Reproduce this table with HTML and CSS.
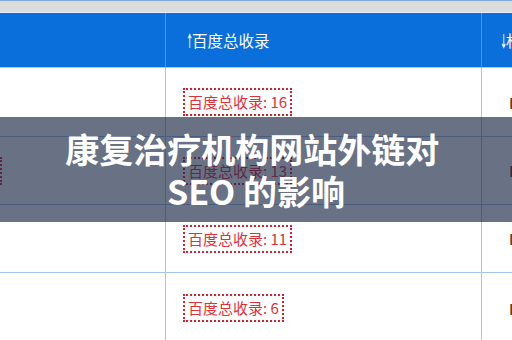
FILE: index.html
```html
<!DOCTYPE html>
<html lang="zh-CN">
<head>
<meta charset="utf-8">
<title>康复治疗机构网站外链对 SEO 的影响</title>
<link rel="stylesheet" href="styles.css">
</head>
<body>
<div class="page">
  <div class="topbar"></div>
  <div class="table">
    <div class="row head">
      <div class="cell c1"></div>
      <div class="cell c2"><span class="arrow">↑</span>百度总收录</div>
      <div class="cell c3"><span class="arrow">↓</span>权重</div>
    </div>
    <div class="row r1">
      <div class="cell c1"></div>
      <div class="cell c2"><span class="tag">百度总收录: 16</span></div>
      <div class="cell c3"><span class="dark">B</span></div>
    </div>
    <div class="row">
      <div class="cell c1"><span class="tag edge">百度总收录: 9</span></div>
      <div class="cell c2"><span class="tag">百度总收录: 13</span></div>
      <div class="cell c3"><span class="dark">B</span></div>
    </div>
    <div class="row">
      <div class="cell c1"></div>
      <div class="cell c2"><span class="tag">百度总收录: 11</span></div>
      <div class="cell c3"><span class="dark">B</span></div>
    </div>
    <div class="row last">
      <div class="cell c1"></div>
      <div class="cell c2"><span class="tag">百度总收录: 6</span></div>
      <div class="cell c3"><span class="dark">B</span></div>
    </div>
  </div>
  <div class="overlay">
    <h1 class="title">康复治疗机构网站外链对 SEO 的影响</h1>
  </div>
</div>
</body>
</html>
```
FILE: styles.css
```css
* { box-sizing: border-box; }
html, body { margin: 0; padding: 0; }
body {
  width: 512px;
  height: 340px;
  overflow: hidden;
  background: #ffffff;
  font-family: "Noto Sans CJK SC", "Noto Sans", sans-serif;
}
.page {
  position: relative;
  width: 512px;
  height: 340px;
  overflow: hidden;
}
.topbar {
  height: 13px;
  background: #dcdcdc;
  border-top: 1px solid #7fa9e0;
  border-bottom: 1px solid #e9eff8;
}
.table {
  display: flex;
  flex-direction: column;
}
.row {
  display: grid;
  grid-template-columns: 166px 316px 1fr;
  height: 68px;
}
.row.head {
  height: 55px;
  background: #0a6fda;
  color: #ffffff;
  font-size: 15.5px;
}
.row.r1 { height: 69px; }
.row.last { height: 70px; }
.cell {
  display: flex;
  align-items: center;
  border-right: 1px solid #a3c5ee;
  border-bottom: 1px solid #a3c5ee;
  overflow: hidden;
  white-space: nowrap;
}
.head .cell {
  border-right-color: #4d93e4;
  border-bottom-color: #a9caf0;
}
.row.last .cell { border-bottom: none; }
.arrow {
  display: inline-block;
  flex-shrink: 0;
  font-size: 16px;
  font-weight: bold;
  transform: scaleX(0.45);
  transform-origin: 0 50%;
  margin-right: -10px;
}
.c2 { padding-left: 20px; }
.row:not(.head) .c2 { padding-left: 17px; }
.c3 { padding-left: 18px; border-right: none; }
.row:not(.head) .c3 { padding-left: 27px; }
.c1 { justify-content: flex-end; padding-right: 163px; }
.tag {
  display: inline-block;
  border: 2px dotted #d8202c;
  padding: 2px 3px;
  color: #e0303a;
  font-size: 15px;
  line-height: 20px;
}
.tag.edge {
  flex-shrink: 0;
  color: #c02838;
}
.dark {
  color: #444444;
  font-size: 15px;
  font-weight: bold;
}
.overlay {
  position: absolute;
  left: 0;
  top: 117px;
  width: 512px;
  height: 105px;
  background: rgba(28, 40, 70, 0.66);
  display: flex;
  align-items: center;
  justify-content: center;
  padding: 0 56px;
}
.title {
  margin: 0;
  color: #ffffff;
  font-size: 34px;
  line-height: 42px;
  font-weight: bold;
  text-align: center;
  white-space: break-spaces;
  font-family: "Noto Sans CJK SC", "Noto Sans", sans-serif;
}
```
